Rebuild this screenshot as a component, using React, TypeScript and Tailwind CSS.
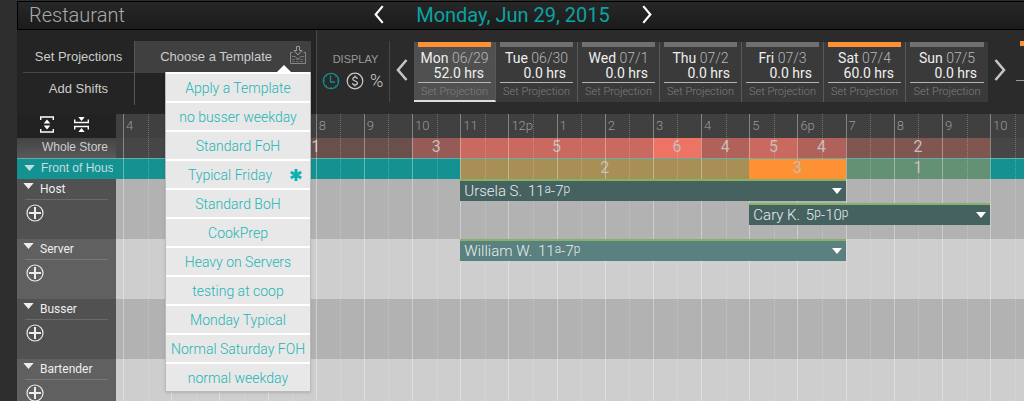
import { useState } from "react";
import type { ReactNode } from "react";
import { clsx } from "clsx";

const DAY_START = 4;
const HOURS_SHOWN = 18.7;

const pct = (hours: number) => `${(hours / HOURS_SHOWN) * 100}%`;

const days = [
  { name: "Mon", date: "06/29", hours: "52.0", scheduled: true },
  { name: "Tue", date: "06/30", hours: "0.0", scheduled: false },
  { name: "Wed", date: "07/1", hours: "0.0", scheduled: false },
  { name: "Thu", date: "07/2", hours: "0.0", scheduled: false },
  { name: "Fri", date: "07/3", hours: "0.0", scheduled: false },
  { name: "Sat", date: "07/4", hours: "60.0", scheduled: true },
  { name: "Sun", date: "07/5", hours: "0.0", scheduled: false },
];

const templates = [
  "Apply a Template",
  "no busser weekday",
  "Standard FoH",
  "Typical Friday",
  "Standard BoH",
  "CookPrep",
  "Heavy on Servers",
  "testing at coop",
  "Monday Typical",
  "Normal Saturday FOH",
  "normal weekday",
];

const hourLabels = [
  "4", "5", "6", "7", "8", "9", "10", "11", "12p", "1",
  "2", "3", "4", "5", "6p", "7", "8", "9", "10",
];

type Segment = { start: number; end: number; count?: number; color: string };

const storeCoverage: Segment[] = [
  { start: 4, end: 6, color: "" },
  { start: 6, end: 10, count: 1, color: "bg-[#69504d]" },
  { start: 10, end: 11, count: 3, color: "bg-[#965b56]" },
  { start: 11, end: 15, count: 5, color: "bg-[#ca695f]" },
  { start: 15, end: 16, count: 6, color: "bg-[#ed7364]" },
  { start: 16, end: 17, count: 4, color: "bg-[#b0625a]" },
  { start: 17, end: 18, count: 5, color: "bg-[#ca695f]" },
  { start: 18, end: 19, count: 4, color: "bg-[#b0625a]" },
  { start: 19, end: 22, count: 2, color: "bg-[#7f5650]" },
];

const frontCoverage: Segment[] = [
  { start: 4, end: 11, color: "" },
  { start: 11, end: 17, count: 2, color: "bg-[#a78f56]" },
  { start: 17, end: 19, count: 3, color: "relative z-10 bg-[#ff9135]" },
  { start: 19, end: 22, count: 1, color: "bg-[#649173]" },
];

type Shift = {
  name: string;
  from: [string, string];
  to: [string, string];
  start: number;
  end: number;
};

const roles: { name: string; shifts: Shift[] }[] = [
  {
    name: "Host",
    shifts: [
      { name: "Ursela S.", from: ["11", "a"], to: ["7", "p"], start: 11, end: 19 },
      { name: "Cary K.", from: ["5", "p"], to: ["10", "p"], start: 17, end: 22 },
    ],
  },
  {
    name: "Server",
    shifts: [{ name: "William W.", from: ["11", "a"], to: ["7", "p"], start: 11, end: 19 }],
  },
  { name: "Busser", shifts: [] },
  { name: "Bartender", shifts: [] },
];

function Chevron({ dir, className }: { dir: "left" | "right"; className: string }) {
  return (
    <svg viewBox="0 0 12 22" className={className} fill="none" stroke="currentColor" strokeWidth="2.6">
      <path d={dir === "left" ? "M10.5 1 2 11l8.5 10" : "M1.5 1 10 11 1.5 21"} />
    </svg>
  );
}

function Triangle({ className }: { className: string }) {
  return (
    <svg viewBox="0 0 12 7" className={className} fill="currentColor">
      <path d="M0 0h12L6 7z" />
    </svg>
  );
}

function ImportIcon() {
  return (
    <svg viewBox="0 0 16 18" className="h-[18px] w-4" fill="none" stroke="#999" strokeWidth="1">
      <path d="M2.500 6.500H.5v11h15v-11h-2" stroke="#888" />
      <path d="M6.500.5h3v4h2.500L8 9 4 4.500h2.500z" />
      <path d="M2 10.500h3.500l1 2h3l1-2H14" stroke="#777" />
      <path d="M2 13.500h12M2 15.500h12" stroke="#666" strokeDasharray="3 1" />
    </svg>
  );
}

function ClockIcon() {
  return (
    <svg viewBox="0 0 18 18" className="size-[18px]" fill="none" stroke="currentColor" strokeWidth="1.3">
      <circle cx="9" cy="9" r="7.7" />
      <path d="M8.5 3.5V10H13" />
      <path d="M1.500 9H3M15 9h1.500M9 15v1.500M3.700 3.700l1 1M14.300 3.700l-1 1M3.700 14.300l1-1M14.300 14.300l-1-1" strokeWidth="1" />
    </svg>
  );
}

function DollarIcon() {
  return (
    <svg viewBox="0 0 18 18" className="size-[18px]" fill="none" stroke="currentColor" strokeWidth="1.2">
      <circle cx="9" cy="9" r="7.8" />
      <path d="M11.300 7C11.200 5.800 10.300 5.200 9 5.200c-1.300 0-2.200.7-2.200 1.800C6.800 9.500 11.400 8.400 11.400 11c0 1.200-1 1.900-2.400 1.900S6.600 12.200 6.600 11M9 3.500v1.700M9 12.900v1.700" />
    </svg>
  );
}

function ExpandIcon() {
  return (
    <svg viewBox="0 0 14 17" className="h-[17px] w-3.5" fill="none" stroke="currentColor" strokeWidth="1.4">
      <path d="M.7 4V1h12.6v3M.7 13v3h12.6v-3" />
      <path d="M7 3.500 10.300 7.600H3.700zM7 13.500 3.700 9.400h6.600z" fill="currentColor" stroke="none" />
    </svg>
  );
}

function CollapseIcon() {
  return (
    <svg viewBox="0 0 15 17" className="h-[17px] w-[15px]" fill="none" stroke="currentColor" strokeWidth="1.4">
      <path d="M.7 3.5v3h13.6v-3M.7 13.5v-3h13.6v3" />
      <path d="M7.5 5 4.3 1h6.4zM7.5 12l3.2 4H4.3z" fill="currentColor" stroke="none" />
    </svg>
  );
}

function AddIcon() {
  return (
    <svg viewBox="0 0 18 18" className="size-[18px]" fill="none" stroke="currentColor">
      <circle cx="9" cy="9" r="8" strokeWidth="1.2" />
      <path d="M9 3v12M3 9h12" strokeWidth="2" />
    </svg>
  );
}

function AsteriskIcon() {
  return (
    <svg viewBox="0 0 12 12" className="size-3" stroke="#10b0b2" strokeWidth="3">
      <path d="M6 0v12M.8 3l10.4 6M11.2 3 .8 9" />
    </svg>
  );
}

function TemplateMenu({ selected, onSelect }: { selected: string; onSelect: (t: string) => void }) {
  return (
    <div className="absolute top-full right-0 z-30 -mt-px w-[146px]">
      <svg viewBox="0 0 14 7" className="absolute right-5 bottom-full h-[7px] w-3.5" fill="#fff">
        <path d="M0 7 7 0l7 7z" />
      </svg>
      <ul className="border-x border-b border-[#bbb] bg-[#e8e8e8] shadow">
        {templates.map((t) => (
          <li key={t} className="relative border-t-2 border-white">
            <button
              type="button"
              onClick={() => onSelect(t)}
              className="block h-[27px] w-full text-center text-sm font-light whitespace-nowrap text-[#1cb5b5]"
            >
              <span className={clsx(t === selected && "mr-4")}>{t}</span>
            </button>
            {t === selected && (
              <span className="absolute top-2 right-2">
                <AsteriskIcon />
              </span>
            )}
          </li>
        ))}
      </ul>
    </div>
  );
}

function DayCard({ day, active, onClick }: { day: (typeof days)[number]; active: boolean; onClick: () => void }) {
  return (
    <div
      className={clsx(
        "flex h-[60px] flex-col border-r border-[#5a5a5a] px-1 last:border-r-0",
        active ? "border-b-2 border-b-[#ddd] bg-[#505050]" : "bg-[#3a3a3a]"
      )}
    >
      <div className={clsx("h-[5px]", day.scheduled ? "bg-[#ff9135]" : "bg-[#707070]")} />
      <button type="button" onClick={onClick} className="border-b border-[#b5b5b5] pt-[3px] pb-px text-center text-sm">
        <span className="block h-4 leading-4 whitespace-nowrap text-[#b8b8b8]">
          <span className="text-[#eee]">{day.name}</span> <span className="font-light">{day.date}</span>
        </span>
        <span className="block h-[15px] pr-[7px] text-right leading-[15px] whitespace-nowrap text-[#f0f0f0]">
          {day.hours} hrs
        </span>
      </button>
      <button type="button" className="h-[17px] text-[11px] leading-[17px] font-light whitespace-nowrap text-[#7f7f7f]">
        Set Projection
      </button>
    </div>
  );
}

function Row({ side, sideClass, trackClass, children }: {
  side: ReactNode;
  sideClass: string;
  trackClass: string;
  children?: ReactNode;
}) {
  return (
    <div className="flex">
      <div className={clsx("w-[99px] shrink-0 overflow-hidden", sideClass)}>{side}</div>
      <div className={clsx("min-w-0 flex-1 overflow-hidden pl-[7px]", trackClass)}>{children}</div>
    </div>
  );
}

function Coverage({ segments }: { segments: Segment[] }) {
  return (
    <div className="flex h-5">
      {segments.map((s) => (
        <div
          key={s.start}
          style={{ width: pct(s.end - s.start) }}
          className={clsx("shrink-0 text-center text-base leading-[18px] text-[#c4bdb8]", s.color)}
        >
          {s.count}
        </div>
      ))}
    </div>
  );
}

function ShiftBar({ shift, color }: { shift: Shift; color: string }) {
  return (
    <button
      type="button"
      style={{ marginLeft: pct(shift.start - DAY_START), width: pct(shift.end - shift.start) }}
      className={clsx(
        "relative z-10 flex h-[22px] items-center justify-between border-t-2 border-[#82b366] px-1 text-[15px] leading-5 font-light whitespace-nowrap text-[#e6efee]",
        color
      )}
    >
      <span>
        <span className="mr-0.5">{shift.name}</span> {shift.from[0]}
        <span className="align-[3px] text-xs leading-none">{shift.from[1]}</span>-{shift.to[0]}
        <span className="align-[3px] text-xs leading-none">{shift.to[1]}</span>
      </span>
      <Triangle className="h-1.5 w-2.5 text-white" />
    </button>
  );
}

function GridLines() {
  return (
    <div className="pointer-events-none absolute inset-y-0 right-0 left-[99px] overflow-hidden pl-[7px]">
      <div className="flex h-full">
        {hourLabels.map((_, i) => (
          <div key={i} style={{ width: pct(1) }} className="flex shrink-0 border-l border-white/35">
            <div className="ml-[50%] border-l border-dotted border-white/25" />
          </div>
        ))}
      </div>
    </div>
  );
}

export default function App() {
  const [menuOpen, setMenuOpen] = useState(true);
  const [template, setTemplate] = useState("Typical Friday");
  const [activeDay, setActiveDay] = useState("Mon");

  return (
    <div className="flex h-screen flex-col overflow-hidden bg-[#2e2e2e] pl-[17px] font-[Roboto,sans-serif]">
      {/* Title bar */}
      <header className="mt-px grid h-[29px] shrink-0 grid-cols-[1fr_auto_1fr] items-center border-y border-l border-black bg-linear-to-b from-[#272727] to-[#1b1b1b] pr-4">
        <h1 className="-mt-0.5 pl-[11px] text-xl leading-7 font-light text-[#aaa]">Restaurant</h1>
        <div className="-mt-0.5 flex items-center gap-8">
          <button type="button" aria-label="Previous day" className="text-white">
            <Chevron dir="left" className="h-[19px] w-2.5" />
          </button>
          <span className="text-xl leading-7 whitespace-nowrap text-[#0aa3a3]">Monday, Jun 29, 2015</span>
          <button type="button" aria-label="Next day" className="text-white">
            <Chevron dir="right" className="h-[19px] w-2.5" />
          </button>
        </div>
      </header>

      {/* Toolbar */}
      <div className="flex h-[84px] shrink-0 bg-[#2b2b2b]">
        <div className="flex w-[300px] shrink-0 items-start border-r border-[#484848] bg-[#242424] pt-[11px] pl-1.5 font-['Liberation_Sans',sans-serif] text-[13px] text-[#ccc]">
          <div className="w-[112px] border-r border-[#555]">
            <button type="button" className="block h-8 w-full border-b border-[#484848]">
              Set Projections
            </button>
            <button type="button" className="block h-8 w-full">
              Add Shifts
            </button>
          </div>
          <div className="relative w-[176px] font-[Roboto,sans-serif]">
            <button
              type="button"
              aria-expanded={menuOpen}
              onClick={() => setMenuOpen(!menuOpen)}
              className="flex h-8 w-full items-center justify-end gap-[18px] bg-[#404040] pr-[5px] font-['Liberation_Sans',sans-serif]"
            >
              Choose a Template
              <span className="-mt-1">
                <ImportIcon />
              </span>
            </button>
            {menuOpen && <TemplateMenu selected={template} onSelect={setTemplate} />}
          </div>
        </div>

        <div className="mt-[11px] h-[61px] w-[73px] shrink-0 border-r border-[#484848] pt-2.5 pl-[5px]">
          <div className="text-center font-['Liberation_Sans',sans-serif] text-[11px] leading-4 text-[#999]">
            DISPLAY
          </div>
          <div className="mt-[5px] flex items-center gap-1.5 text-[#ccc]">
            <button type="button" aria-label="Hours" className="text-[#168d8d]">
              <ClockIcon />
            </button>
            <button type="button" aria-label="Dollars">
              <DollarIcon />
            </button>
            <button type="button" className="text-lg leading-[18px] font-light">
              %
            </button>
          </div>
        </div>

        <button type="button" aria-label="Previous week" className="mb-1 w-6 shrink-0 pl-1.5 text-[#c4c4c4]">
          <Chevron dir="left" className="h-[22px] w-3" />
        </button>
        <div className="mt-3 grid min-w-0 flex-1 grid-cols-7">
          {days.map((d) => (
            <DayCard key={d.name} day={d} active={d.name === activeDay} onClick={() => setActiveDay(d.name)} />
          ))}
        </div>
        <button type="button" aria-label="Next week" className="mb-1 w-7 shrink-0 pl-1.5 text-[#c4c4c4]">
          <Chevron dir="right" className="h-[22px] w-3" />
        </button>
        <div className="mt-[11px] h-10 w-2 shrink-0 border-b border-[#999]">
          <div className="ml-1 h-[5px] bg-[#ff9135]" />
        </div>
      </div>

      {/* Schedule */}
      <div className="relative min-h-0 flex-1 overflow-hidden">
        <Row
          sideClass="bg-[#222]"
          trackClass="bg-[#404040]"
          side={
            <div className="flex h-6 items-start gap-5 pt-0.5 pl-[23px] text-white">
              <button type="button" aria-label="Expand all">
                <ExpandIcon />
              </button>
              <button type="button" aria-label="Collapse all">
                <CollapseIcon />
              </button>
            </div>
          }
        >
          <div className="flex h-6">
            {hourLabels.map((h, i) => (
              <div key={i} style={{ width: pct(1) }} className="shrink-0 pl-[3px] text-[13px] leading-6 font-light text-[#9a9a9a]">
                {h}
              </div>
            ))}
          </div>
        </Row>

        <Row
          sideClass="bg-linear-to-b from-[#444] to-[#595959]"
          trackClass="bg-[#464646]"
          side={
            <div className="pl-[25px] font-['Liberation_Sans',sans-serif] text-xs leading-[18px] whitespace-nowrap text-[#ccc]">
              Whole Store
            </div>
          }
        >
          <Coverage segments={storeCoverage} />
        </Row>

        <Row
          sideClass="border-t border-[#6aa] bg-[#149292]"
          trackClass="border-t border-[#6aa] bg-[#149292]"
          side={
            <button type="button" className="flex h-[18px] w-24 items-center gap-1.5 overflow-hidden pl-[7px] font-['Liberation_Sans',sans-serif] text-xs whitespace-nowrap text-[#c3dede]">
              <Triangle className="h-1.5 w-[11px] shrink-0" />
              Front of House
            </button>
          }
        >
          <Coverage segments={frontCoverage} />
        </Row>

        {roles.map((role, i) => (
          <Row
            key={role.name}
            sideClass={i % 2 ? "bg-[#606060]" : "bg-[#515151]"}
            trackClass={i % 2 ? "bg-[#cecece]" : "bg-[#b2b2b2]"}
            side={
              <div className="h-[60px] pr-2 pl-1.5 text-[#eee]">
                <button type="button" className="flex h-5 w-full items-center gap-1.5 text-xs">
                  <Triangle className="mb-1.5 h-1.5 w-[11px]" />
                  {role.name}
                </button>
                <div className="ml-0.5 border-t border-white/15" />
                <button type="button" aria-label={`Add ${role.name} shift`} className="mt-1 ml-[3px] block">
                  <AddIcon />
                </button>
              </div>
            }
          >
            <div className="flex h-[60px] flex-col gap-0.5">
              {role.shifts.map((s) => (
                <ShiftBar key={s.name} shift={s} color={i % 2 ? "bg-[#5a807f]" : "bg-[#456160]"} />
              ))}
            </div>
          </Row>
        ))}
        <GridLines />
      </div>
    </div>
  );
}
